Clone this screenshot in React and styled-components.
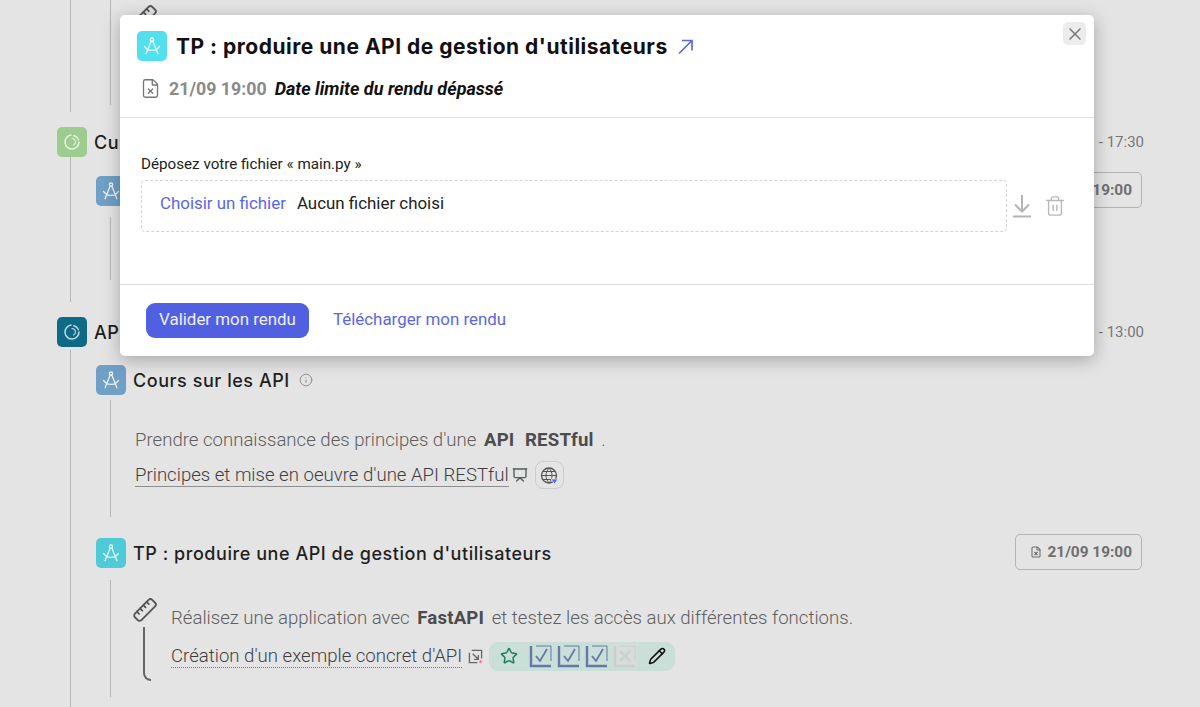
import React from "react";
import styled, { createGlobalStyle } from "styled-components";
import { X, Trash2, FileX, Info, Star, Pencil, Ruler, Presentation } from "lucide-react";

const GlobalStyle = createGlobalStyle`
    html, body {
        margin: 0;
        padding: 0;
        height: 100%;
        overflow: hidden;
        background: #e4e4e4;
        font-family: "Roboto", "Liberation Sans", sans-serif;
    }
`;

const CompassIcon = ({ color = "rgba(255,255,255,.85)", size = 22 }) => (
    <svg width={size} height={size} viewBox="0 0 20 20" fill="none" stroke={color} strokeWidth="1.2" strokeLinecap="round">
        <circle cx="10" cy="4.2" r="1.5" />
        <path d="M9.2 5.6 4.6 17M10.8 5.6l4.6 11.4M3.2 10.4c1.6 2.6 4 3.6 6.8 3.6s5.2-1 6.8-3.6" />
    </svg>
);

const PieIcon = () => (
    <svg width="18" height="18" viewBox="0 0 18 18" fill="none" stroke="rgba(255,255,255,.75)" strokeWidth="1.5" strokeLinecap="round">
        <path d="M8 2.1A7 7 0 1 0 16 9" />
        <path d="M10.5 2.6A7 7 0 0 1 15.6 7" strokeWidth="1.1" />
        <path d="M9 5.5A3.5 3.5 0 0 1 12.5 9a3.5 3.5 0 0 1-2 3" strokeWidth="1.1" />
    </svg>
);

const DownloadIcon = () => (
    <svg width="20" height="24" viewBox="0 0 20 24" fill="none" stroke="#b4b4b4" strokeWidth="2">
        <path d="M10 1v16M3 10.5l7 7 7-7M1 22.5h18" />
    </svg>
);

const OutArrow = () => (
    <svg width="17" height="17" viewBox="0 0 17 17" fill="none" stroke="#5a67e8" strokeWidth="1.7">
        <path d="M2 15.5 15 2.5M5 2.5h10v10" />
    </svg>
);

const GlobeMark = () => (
    <svg width="19" height="19" viewBox="0 0 19 19" fill="none" stroke="#555" strokeWidth="1.3">
        <circle cx="9" cy="9.5" r="7.5" />
        <path d="M1.5 9.5h15M3 5.5h12M3 13.5h12M9 2c-4 4.5-4 10.5 0 15M9 2c4 4.5 4 10.5 0 15" strokeWidth="1" />
        <path d="M11 13h7l-3.5 5z" fill="#5a67e8" stroke="#e4e4e4" strokeWidth=".8" />
    </svg>
);

const SubmitFileMark = () => (
    <svg width="15" height="15" viewBox="0 0 16 16" fill="none" stroke="#666" strokeWidth="1.4">
        <path d="M4 1.5h10.5V10M1.5 4v10.5H10M5 5l6 6M11 6.5V11H6.5" />
        <circle cx="13.5" cy="13.5" r="1.7" fill="#f06aa0" stroke="#f7c6dc" strokeWidth=".8" />
    </svg>
);

const CheckBox = ({ crossed }) => (
    <svg width="24" height="24" viewBox="0 0 24 24" fill="none" stroke={crossed ? "#c9d0ce" : "#6379a8"} strokeWidth="1.8">
        <path d="M2 2v20h20" strokeWidth="2.4" />
        <path d="M22 17V2H7" strokeWidth="1" />
        {crossed ? <path d="M7 7l10 10M17 7 7 17" /> : <path d="M7 12l4 5 7-12" />}
    </svg>
);

const Timeline = () => (
    <Page>
        <IntroChapter>
            <LessonBody $height={105} $top={0}>
                <TopRuler><FlippedRuler size={26} strokeWidth={1.7} color="#555" /></TopRuler>
            </LessonBody>
        </IntroChapter>

        <ChapterHead>
            <IconTile $bg="#9ccc8e"><PieIcon /></IconTile>
            <ChapterTitle>Cursus</ChapterTitle>
            <ChapterTime>- 17:30</ChapterTime>
        </ChapterHead>
        <Chapter $height={145} $gap={0} $top={19}>
            <LessonHead>
                <IconTile $bg="#70a0c6"><CompassIcon /></IconTile>
                <DateBadge>19:00</DateBadge>
            </LessonHead>
            <LessonBody $height={63} $top={11} />
        </Chapter>

        <ChapterHead>
            <IconTile $bg="#0f6a85"><PieIcon /></IconTile>
            <ChapterTitle>API</ChapterTitle>
            <ChapterTime>- 13:00</ChapterTime>
        </ChapterHead>
        <Chapter $height={360} $gap={3} $top={15}>
            <LessonHead>
                <IconTile $bg="#70a0c6"><CompassIcon /></IconTile>
                <LessonTitle>Cours sur les API</LessonTitle>
                <InfoMark><Info size={14} strokeWidth={1.5} /></InfoMark>
            </LessonHead>
            <LessonBody $height={117} $top={5}>
                <Paragraph $top={29}>
                    Prendre connaissance des principes d'une <strong>API</strong> <strong>RESTful</strong> .
                </Paragraph>
                <ResourceRow $top={11}>
                    <ResourceLink>Principes et mise en oeuvre d'une API RESTful</ResourceLink>
                    <Presentation size={16} strokeWidth={2} color="#4d5f58" />
                    <GlobeChip><GlobeMark /></GlobeChip>
                </ResourceRow>
            </LessonBody>

            <LessonHead $top={21}>
                <IconTile $bg="#4fcbd8"><CompassIcon /></IconTile>
                <LessonTitle>TP : produire une API de gestion d'utilisateurs</LessonTitle>
                <DateBadge>
                    <FileX size={12} strokeWidth={2.2} />
                    21/09 19:00
                </DateBadge>
            </LessonHead>
            <LessonBody $height={117} $top={12}>
                <NoteBlock>
                    <RulerSlot>
                        <FlippedRuler size={26} strokeWidth={1.7} color="#555" />
                        <Bracket />
                    </RulerSlot>
                    <div>
                        <Paragraph $top={27}>
                            Réalisez une application avec <strong>FastAPI</strong> et testez les accès aux différentes fonctions.
                        </Paragraph>
                        <ResourceRow $top={14}>
                            <ExerciseLink>Création d'un exemple concret d'API</ExerciseLink>
                            <SubmitFileMark />
                            <Progress>
                                <Star size={18} strokeWidth={2} color="#1f7a5c" />
                                <Checks>
                                    <CheckBox />
                                    <CheckBox />
                                    <CheckBox />
                                    <CheckBox crossed />
                                </Checks>
                                <Pencil size={18} strokeWidth={2} color="#111" />
                            </Progress>
                        </ResourceRow>
                    </div>
                </NoteBlock>
            </LessonBody>
        </Chapter>
    </Page>
);

const App = () => (
    <>
        <GlobalStyle />
        <Timeline />
        <Modal>
            <CloseButton><X size={20} strokeWidth={1.8} /></CloseButton>
            <ModalHeader>
                <ModalTitleRow>
                    <IconTile $bg="#52e0ef"><CompassIcon /></IconTile>
                    <ModalTitle>TP : produire une API de gestion d'utilisateurs</ModalTitle>
                    <OutArrow />
                </ModalTitleRow>
                <DeadlineRow>
                    <FileX size={21} strokeWidth={1.5} color="#777" />
                    <DeadlineDate>21/09 19:00</DeadlineDate>
                    <DeadlineNote>Date limite du rendu dépassé</DeadlineNote>
                </DeadlineRow>
            </ModalHeader>
            <ModalBody>
                <FieldLabel>Déposez votre fichier « main.py »</FieldLabel>
                <FieldRow>
                    <DropZone>
                        <ChooseFile>Choisir un fichier</ChooseFile>
                        <span>Aucun fichier choisi</span>
                    </DropZone>
                    <DownloadIcon />
                    <Trash2 size={22} strokeWidth={1.5} color="#b8b8b8" />
                </FieldRow>
            </ModalBody>
            <ModalFooter>
                <PrimaryButton>Valider mon rendu</PrimaryButton>
                <FooterLink>Télécharger mon rendu</FooterLink>
            </ModalFooter>
        </Modal>
    </>
);

export default App;

const Page = styled.div`
    padding: 0 58px 0 57px;
    height: 707px;
    overflow: hidden;
    box-sizing: border-box;
`;
const Chapter = styled.section`
    box-sizing: border-box;
    height: ${(p) => p.$height}px;
    margin: ${(p) => p.$gap}px 0 15px 13px;
    padding: ${(p) => p.$top}px 0 0 25px;
    border-left: 1px solid #b5b5b5;
`;
const IntroChapter = styled(Chapter).attrs({ $height: 112, $gap: 0, $top: 0 })``;
const ChapterHead = styled.header`
    display: flex;
    align-items: center;
    gap: 7px;
    height: 30px;
`;
const ChapterTitle = styled.div`
    font-family: "Inter", sans-serif;
    font-size: 18px;
    font-weight: 500;
    letter-spacing: 0.5px;
    color: #1d1d1d;
`;
const ChapterTime = styled.div`
    margin-left: auto;
    margin-right: -2px;
    font-size: 15px;
    color: #777;
`;
const IconTile = styled.div`
    flex: none;
    width: 30px;
    height: 30px;
    display: flex;
    align-items: center;
    justify-content: center;
    border-radius: 5px;
    background: ${(p) => p.$bg};
`;
const LessonHead = styled.header`
    display: flex;
    align-items: center;
    gap: 7px;
    height: 30px;
    margin-top: ${(p) => p.$top || 0}px;
`;
const LessonTitle = styled.div`
    font-family: "Inter", sans-serif;
    font-size: 18px;
    font-weight: 500;
    letter-spacing: 0.55px;
    color: #1f1f1f;
`;
const InfoMark = styled.span`
    display: flex;
    margin-left: 2px;
    color: #858585;
`;
const DateBadge = styled.div`
    margin: 0 0 2px auto;
    display: flex;
    align-items: center;
    gap: 5px;
    height: 36px;
    box-sizing: border-box;
    padding: 0 9px 1px 14px;
    border: 1.5px solid #b3b3b3;
    border-radius: 5px;
    font-size: 15.4px;
    font-weight: 700;
    color: #6f6f6f;
`;
const LessonBody = styled.div`
    display: flow-root;
    box-sizing: border-box;
    height: ${(p) => p.$height}px;
    margin-top: ${(p) => p.$top}px;
    margin-left: 14px;
    padding-left: 24px;
    border-left: 1px solid #b5b5b5;
`;
const TopRuler = styled.div`
    margin: 4px 0 0 -3px;
`;
const FlippedRuler = styled(Ruler)`
    flex: none;
    transform: scaleX(-1);
`;
const Paragraph = styled.p`
    margin: ${(p) => p.$top}px 0 0;
    font-size: 18.6px;
    font-weight: 300;
    line-height: 22px;
    color: #5e5e5e;
    strong {
        margin: 0 3px;
        font-weight: 700;
        letter-spacing: 0.2px;
        color: #4c4c4c;
    }
`;
const ResourceRow = styled.div`
    display: flex;
    align-items: center;
    gap: 3px;
    margin-top: ${(p) => p.$top}px;
    height: 26px;
`;
const ResourceLink = styled.span`
    font-size: 18.6px;
    font-weight: 300;
    color: #3f3f3f;
    border-bottom: 1px solid #8f8f8f;
    line-height: 22px;
`;
const ExerciseLink = styled(ResourceLink)`
    margin-right: 3px;
    border-bottom: 1px dotted #777;
`;
const GlobeChip = styled.span`
    box-sizing: border-box;
    display: flex;
    align-items: center;
    justify-content: center;
    width: 29px;
    height: 28px;
    margin-left: 4px;
    border: 1px solid #cdcdcd;
    border-radius: 8px;
`;
const NoteBlock = styled.div`
    display: flex;
    gap: 13px;
    margin-left: -3px;
`;
const RulerSlot = styled.div`
    flex: none;
    width: 26px;
    display: flex;
    flex-direction: column;
    align-items: center;
    padding-top: 17px;
`;
const Bracket = styled.div`
    width: 6px;
    height: 52px;
    margin: 4px 0 0 4px;
    border-left: 2px solid #666;
    border-bottom: 2px solid #666;
    border-bottom-left-radius: 8px;
`;
const Progress = styled.div`
    display: flex;
    align-items: center;
    gap: 11px;
    height: 29px;
    margin-left: 3px;
    padding: 0 9px 0 11px;
    border-radius: 9px;
    background: #cadfd8;
`;
const Checks = styled.div`
    display: flex;
    gap: 4px;
    svg:last-child {
        background: #d5dcda;
    }
`;

const Modal = styled.div`
    position: absolute;
    top: 15px;
    left: 120px;
    width: 974px;
    height: 341px;
    display: flex;
    flex-direction: column;
    background: #fff;
    border-radius: 5px;
    box-shadow: 0 4px 18px rgba(0, 0, 0, 0.28);
`;
const CloseButton = styled.div`
    position: absolute;
    top: 7px;
    right: 8px;
    width: 23px;
    height: 23px;
    display: flex;
    align-items: center;
    justify-content: center;
    border-radius: 5px;
    background: #ececec;
    color: #777;
`;
const ModalHeader = styled.header`
    box-sizing: border-box;
    height: 103px;
    padding: 16px 17px 0;
    border-bottom: 1px solid #dedede;
`;
const ModalTitleRow = styled.div`
    display: flex;
    align-items: center;
    gap: 9px;
`;
const ModalTitle = styled.h2`
    margin: 0;
    font-family: "Inter", sans-serif;
    font-size: 21px;
    font-weight: 700;
    letter-spacing: 0.5px;
    color: #111;
`;
const DeadlineRow = styled.div`
    display: flex;
    align-items: center;
    margin: 17px 0 0 3px;
    gap: 8px;
`;
const DeadlineDate = styled.span`
    font-size: 17.8px;
    font-weight: 700;
    color: #8a8a8a;
`;
const DeadlineNote = styled.em`
    font-size: 18px;
    font-weight: 700;
    color: #111;
`;
const ModalBody = styled.div`
    box-sizing: border-box;
    height: 166px;
    padding: 38px 21px 0;
`;
const FieldLabel = styled.div`
    font-size: 15.2px;
    line-height: 17px;
    color: #222;
`;
const FieldRow = styled.div`
    display: flex;
    align-items: center;
    gap: 5px;
    margin-top: 7px;
    svg:last-child {
        margin-left: 7px;
    }
`;
const DropZone = styled.div`
    box-sizing: border-box;
    width: 866px;
    height: 52px;
    display: flex;
    gap: 11px;
    padding: 12px 18px 0;
    border: 1px dashed #d5d5d5;
    border-radius: 4px;
    font-size: 16.9px;
    color: #222;
`;
const ChooseFile = styled.span`
    color: #5a67e8;
`;
const ModalFooter = styled.footer`
    display: flex;
    align-items: center;
    gap: 24px;
    flex: 1;
    padding: 0 0 0 26px;
    border-top: 1px solid #dedede;
`;
const PrimaryButton = styled.div`
    box-sizing: border-box;
    display: flex;
    align-items: center;
    justify-content: center;
    width: 163px;
    height: 35px;
    padding-bottom: 4px;
    border-radius: 9px;
    background: #5060e0;
    color: #eef0ff;
    font-size: 16.9px;
`;
const FooterLink = styled.span`
    margin-bottom: 4px;
    font-size: 16.9px;
    color: #5a67e8;
`;
